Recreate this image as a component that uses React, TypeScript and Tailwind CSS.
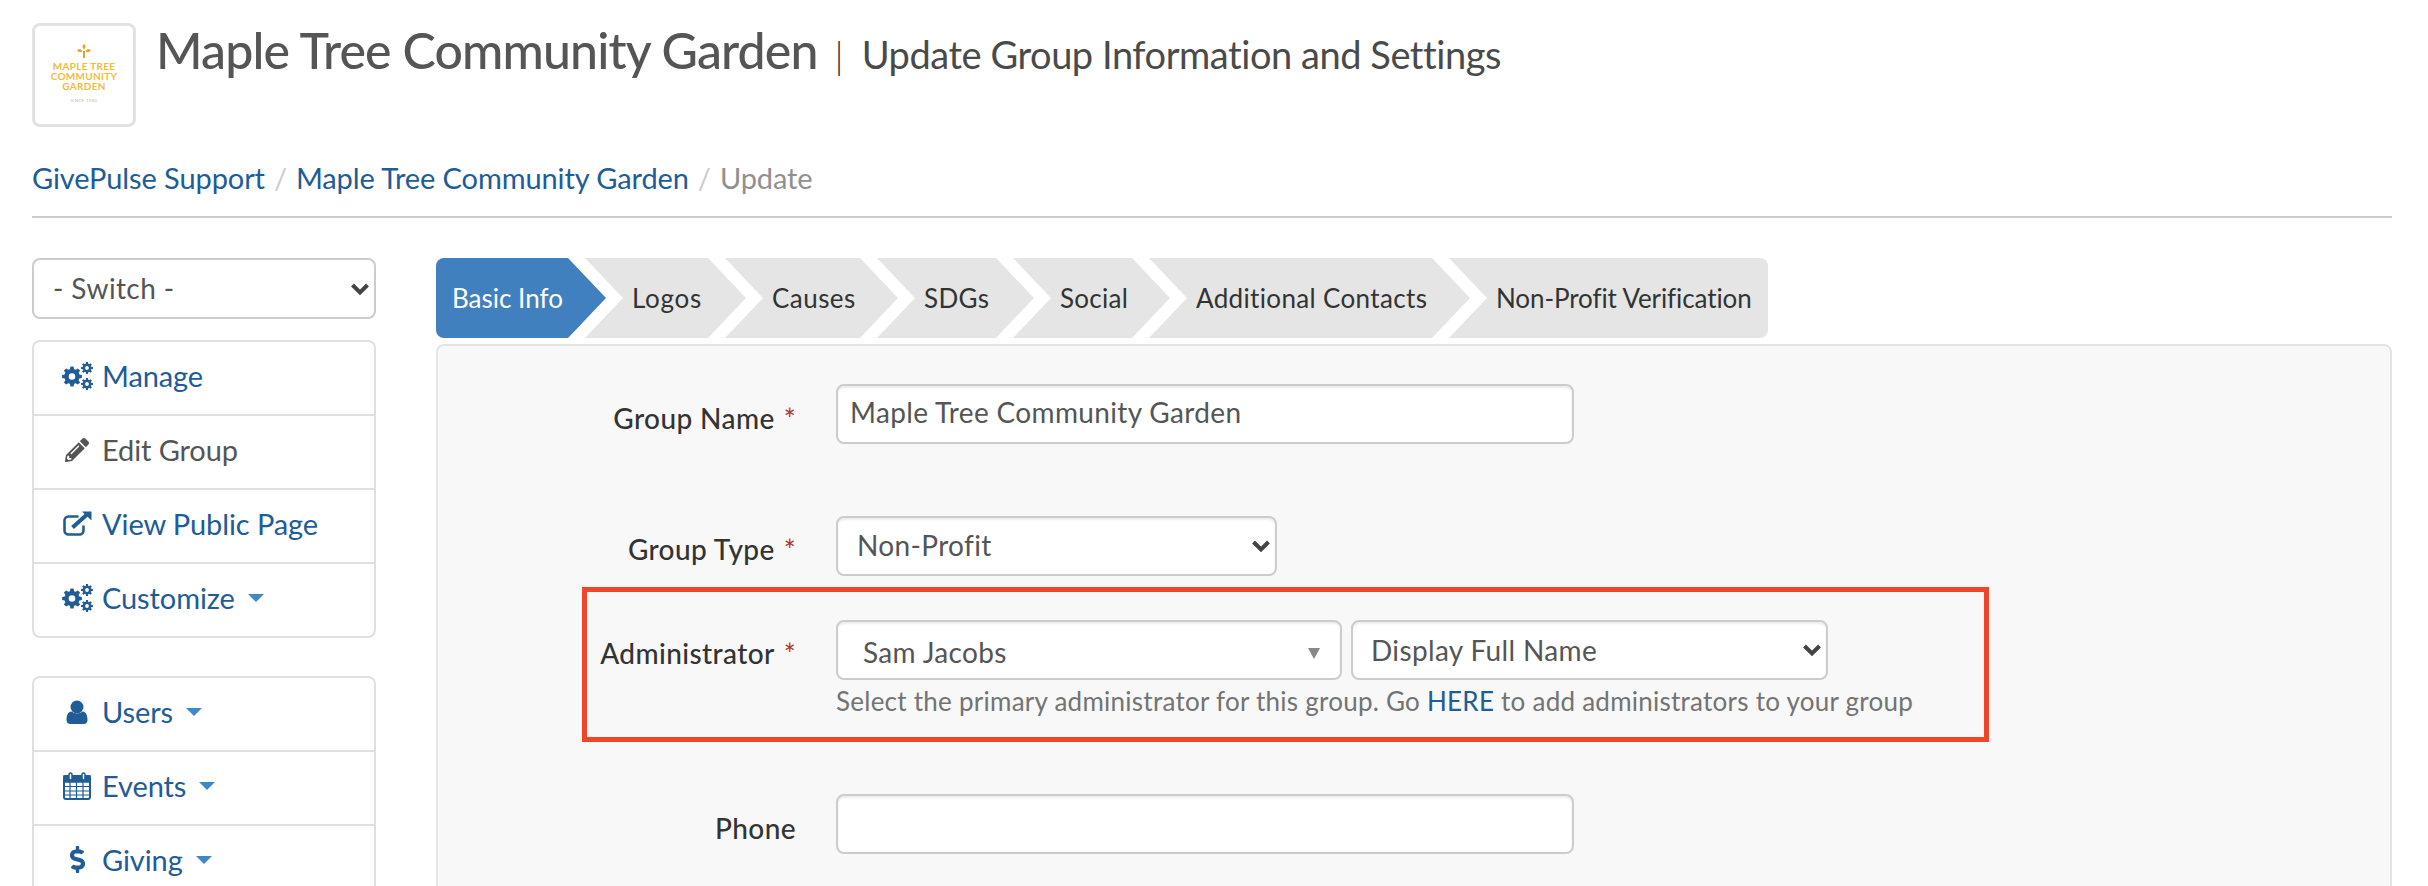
import React from "react";
import { FaPencilAlt, FaDollarSign } from "react-icons/fa";

const Caret = () => (
  <svg width="16" height="8" viewBox="0 0 16 8" className="ml-[13px] shrink-0"><path d="M0 0h16L8 8z" fill="#3f88c8" /></svg>
);

const Chevron = () => (
  <svg width="20" height="14" viewBox="0 0 20 14" className="absolute right-[6px] top-1/2 -translate-y-1/2 pointer-events-none">
    <path d="M2.5 3l7.5 7.5L17.5 3" fill="none" stroke="#444" strokeWidth="4" />
  </svg>
);

function gearPath(cx: number, cy: number, R: number, r: number, hole: number, teeth: number) {
  const pts: string[] = [];
  const step = (Math.PI * 2) / teeth;
  for (let i = 0; i < teeth; i++) {
    const a = i * step - Math.PI / 2;
    const w = step * 0.2;
    const corners: [number, number][] = [
      [r, a - step * 0.36],
      [R, a - w],
      [R, a + w],
      [r, a + step * 0.36],
    ];
    corners.forEach(([rad, ang], j) => {
      pts.push(`${i === 0 && j === 0 ? "M" : "L"}${(cx + rad * Math.cos(ang)).toFixed(2)} ${(cy + rad * Math.sin(ang)).toFixed(2)}`);
    });
  }
  pts.push("Z");
  pts.push(`M${cx - hole} ${cy}a${hole} ${hole} 0 1 0 ${hole * 2} 0a${hole} ${hole} 0 1 0 ${-hole * 2} 0Z`);
  return pts.join("");
}

const CogsIcon = () => (
  <svg width="31" height="28" viewBox="0 0 31 28" fill="currentColor" fillRule="evenodd">
    <path d={gearPath(10, 14.5, 10, 7.600, 3.300, 8)} />
    <path d={gearPath(25, 6, 6, 4.300, 1.900, 8)} />
    <path d={gearPath(25, 22, 6, 4.300, 1.900, 8)} />
  </svg>
);

const ExternalIcon = () => (
  <svg width="29" height="25" viewBox="0 0 29 25" fill="none" stroke="currentColor">
    <path d="M15.500 5.500H5.500a4 4 0 0 0-4 4v10a4 4 0 0 0 4 4h11a4 4 0 0 0 4-4v-5" strokeWidth="2.600" />
    <path d="M9.500 16.500 24 3.500" strokeWidth="4" />
    <path d="M19 0.500h9.500v9z" fill="currentColor" stroke="none" />
  </svg>
);

const UserIcon = () => (
  <svg width="22" height="24" viewBox="0 0 22 24" fill="#205c96">
    <circle cx="11" cy="7" r="6.500" />
    <path d="M0.500 20c0-5 1.500-8 5-8.500 1.500 1.300 3.500 2 5.500 2s4-.7 5.500-2c3.500.5 5 3.500 5 8.500 0 2.500-1.500 4-4 4H4.500c-2.500 0-4-1.500-4-4z" />
  </svg>
);

const CalendarIcon = () => (
  <svg width="28" height="28" viewBox="0 0 28 28" fill="none" stroke="#205c96">
    <rect x="1" y="4" width="26" height="23" rx="2" strokeWidth="2" fill="#fff" />
    <rect x="1" y="4" width="26" height="6" fill="#205c96" strokeWidth="1.500" />
    <path d="M7 10v17M13.500 10v17M20 10v17M1 14.500h26M1 19h26M1 23h26" strokeWidth="1.200" />
    <rect x="6" y="1" width="3" height="7" rx="1.500" fill="#fff" strokeWidth="1.500" />
    <rect x="19" y="1" width="3" height="7" rx="1.500" fill="#fff" strokeWidth="1.500" />
  </svg>
);

const items1 = [
  { icon: <CogsIcon />, label: "Manage", caret: false, color: "text-[#205c96]" },
  { icon: <FaPencilAlt size={24} />, label: "Edit Group", caret: false, color: "text-[#555555]" },
  { icon: <ExternalIcon />, label: "View Public Page", caret: false, color: "text-[#205c96]" },
  { icon: <CogsIcon />, label: "Customize", caret: true, color: "text-[#205c96]" },
];
const items2 = [
  { icon: <UserIcon />, label: "Users", caret: true, color: "text-[#205c96]" },
  { icon: <CalendarIcon />, label: "Events", caret: true, color: "text-[#205c96]" },
  { icon: <FaDollarSign size={27} />, label: "Giving", caret: true, color: "text-[#205c96]" },
];

type Item = { icon: React.ReactNode; label: string; caret: boolean; color: string };

const SideList = ({ items }: { items: Item[] }) => (
  <div className="border-2 border-[#e0e0e0] rounded-lg bg-white">
    {items.map((it, i) => (
      <div key={it.label} className={`flex items-center pb-[5px] ${it.color} ${i > 0 ? "border-t-2 border-[#e0e0e0] h-[74px]" : "h-[72px]"}`}>
        <span className="w-[36px] ml-[25px] mr-[7px] flex justify-center shrink-0">{it.icon}</span>
        <span className="text-[29px] tracking-[-0.1px]">{it.label}</span>
        {it.caret && <Caret />}
      </div>
    ))}
  </div>
);

const tabs = [
  { label: "Basic Info", w: "w-[132px]", t: "tracking-[0px]" },
  { label: "Logos", w: "w-[123px]", t: "tracking-[0.7px]" },
  { label: "Causes", w: "w-[135px]", t: "tracking-[0.45px]" },
  { label: "SDGs", w: "w-[119px]", t: "tracking-[0.35px]" },
  { label: "Social", w: "w-[119px]", t: "tracking-[0.3px]" },
  { label: "Additional Contacts", w: "w-[283px]", t: "tracking-[0.35px]" },
  { label: "Non-Profit Verification", w: "w-[319px]", t: "tracking-[-0.1px]" },
];

const Tabs = () => (
  <div className="flex gap-[17px]">
    {tabs.map((t, i) => {
      const first = i === 0;
      const last = i === tabs.length - 1;
      return (
        <div
          key={t.label}
          className={`relative h-[80px] flex items-center whitespace-nowrap text-[26px] ${t.t} ${t.w} ${first ? "bg-[#4180bf] text-white pl-[16px] rounded-l-lg" : "bg-[#e5e5e5] text-[#333333] pl-[47px]"} ${last ? "rounded-r-lg" : ""}`}
          style={{ zIndex: 10 - i }}
        >
          {t.label}
          {!last && (
            <>
              <span className="absolute left-full top-0 ml-[17px] w-0 h-0 border-y-[40px] border-y-transparent border-l-[38px] border-l-white" />
              <span className="absolute left-full top-0 w-0 h-0 border-y-[40px] border-y-transparent border-l-[38px]" style={{ borderLeftColor: first ? "#4180bf" : "#e5e5e5" }} />
            </>
          )}
        </div>
      );
    })}
  </div>
);

const inputBase = "border-2 border-[#cccccc] rounded-lg bg-white h-[60px] shadow-[inset_0_2px_2px_rgba(0,0,0,0.08)] text-[28px] text-[#555555] tracking-[0.35px] outline-none";

const Label = ({ text, star, pt }: { text: string; star?: boolean; pt: string }) => (
  <div className={`w-[358px] shrink-0 text-right text-[28px] font-medium text-[#333333] tracking-[0.4px] ${pt}`}>
    {text}
    {star && <span className="text-[#b23a36] ml-[9px]">*</span>}
  </div>
);

export default function App() {
  return (
    <div className="w-[2428px] h-[886px] overflow-hidden bg-white pl-[32px] pr-[36px] pt-[23px] relative" style={{ fontFamily: "Lato, 'Open Sans', sans-serif" }}>
      <div className="flex">
        <div className="w-[104px] h-[104px] border-[3px] border-[#e2e2e2] rounded-lg flex flex-col items-center justify-center shrink-0 text-[#f0bc3c] font-bold leading-[10px]">
          <svg width="14" height="14" viewBox="0 0 14 14" className="mb-[3px] -mt-[2px]" fill="#e0a52c">
            <path d="M7 0c2 1.500 2 3.500 0 5.500C5 3.500 5 1.500 7 0zM0 6c2-1.500 4-1 5.500 1C3.500 9 1.500 8.500 0 6zM14 6c-2-1.500-4-1-5.500 1 2 2 4 1.500 5.500-1zM6 7h2v7H6z" />
          </svg>
          <span className="text-[10px] tracking-[0.3px] whitespace-nowrap">MAPLE TREE</span>
          <span className="text-[10px] tracking-[0.3px] whitespace-nowrap">COMMUNITY</span>
          <span className="text-[10px] tracking-[0.3px] whitespace-nowrap">GARDEN</span>
          <span className="text-[4px] leading-[6px] text-[#b9b9a8] font-normal mt-[7px] tracking-[0.5px]">SINCE 1980</span>
        </div>
        <div className="ml-[20px] flex items-baseline -mt-[10px] h-[60px] whitespace-nowrap text-[#555555]">
          <span className="text-[50px] font-medium tracking-[-0.85px]">Maple Tree Community Garden</span>
          <span className="text-[38px] ml-[17px] mr-[18px] font-light text-[#333333]">|</span>
          <span className="text-[38px] tracking-[-0.45px] text-[#4a4a4a]">Update Group Information and Settings</span>
        </div>
      </div>

      <div className="mt-[31px] flex items-center h-[40px] text-[29px] tracking-[-0.1px] text-[#205c96] whitespace-nowrap">
        <span>GivePulse Support</span>
        <span className="text-[#cccccc] mx-[9px]">/</span>
        <span>Maple Tree Community Garden</span>
        <span className="text-[#cccccc] mx-[9px]">/</span>
        <span className="text-[#909090]">Update</span>
      </div>
      <div className="mt-[18px] h-[2px] bg-[#cccccc]" />

      <div className="flex mt-[40px]">
        <div className="w-[344px] shrink-0 text-[29px]">
          <div className="relative">
            <select className="w-full h-[61px] appearance-none border-2 border-[#cccccc] rounded-lg bg-white pl-[19px] pb-[2px] text-[#555555] text-[28px] tracking-[0.4px] outline-none" defaultValue="- Switch -">
              <option>- Switch -</option>
            </select>
            <Chevron />
          </div>
          <div className="mt-[21px]"><SideList items={items1} /></div>
          <div className="mt-[38px]"><SideList items={items2} /></div>
        </div>

        <div className="ml-[60px] flex-1 min-w-0">
          <Tabs />
          <div className="relative mt-[6px] border-2 border-[#e4e4e4] rounded-lg bg-[#f8f8f8] pt-[38px] h-[600px]">
            <div className="flex">
              <Label text="Group Name" star pt="pt-[13px]" />
              <input className={`${inputBase} ml-[40px] w-[738px] pl-[12px] pb-[4px]`} defaultValue="Maple Tree Community Garden" />
            </div>
            <div className="flex mt-[72px]">
              <Label text="Group Type" star pt="pt-[12px]" />
              <div className="relative ml-[40px]">
                <select className={`${inputBase} w-[441px] pl-[19px] pb-[2px] appearance-none tracking-[0.1px]`} defaultValue="Non-Profit">
                  <option>Non-Profit</option>
                </select>
                <Chevron />
              </div>
            </div>
            <div className="flex mt-[44px]">
              <Label text="Administrator" star pt="pt-[12px]" />
              <div className="ml-[40px]">
                <div className="flex gap-[9px]">
                  <div className={`${inputBase} relative w-[506px] flex items-center pl-[25px] pt-[3px]`}>
                    <span>Sam Jacobs</span>
                    <svg width="12" height="11" viewBox="0 0 12 11" className="absolute right-[20px] top-[26px]"><path d="M0 0h12L6 11z" fill="#888888" /></svg>
                  </div>
                  <div className="relative">
                    <select className={`${inputBase} w-[477px] pl-[18px] appearance-none`} defaultValue="Display Full Name">
                      <option>Display Full Name</option>
                    </select>
                    <Chevron />
                  </div>
                </div>
                <p className="mt-[2px] text-[26px] tracking-[0.25px] text-[#737373] whitespace-nowrap">
                  Select the primary administrator for this group. Go <span className="text-[#205c96]">HERE</span> to add administrators to your group
                </p>
              </div>
            </div>
            <div className="flex mt-[73px]">
              <Label text="Phone" pt="pt-[13px]" />
              <input className={`${inputBase} ml-[40px] w-[738px] px-[14px]`} />
            </div>
            <div className="absolute left-[144px] top-[241px] w-[1407px] h-[155px] border-[5px] border-[#f1452a] pointer-events-none" />
          </div>
        </div>
      </div>
    </div>
  );
}
